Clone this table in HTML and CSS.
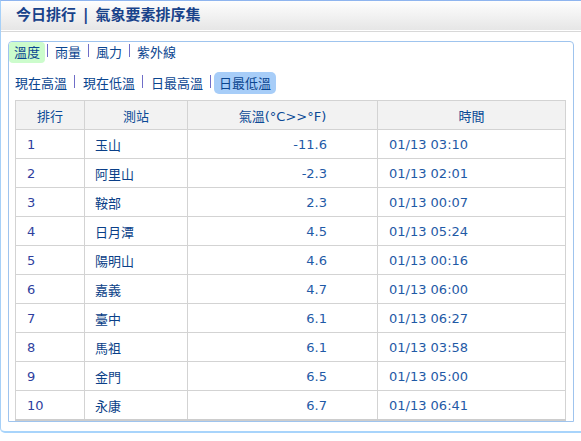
FILE: index.html
```html
<!DOCTYPE html>
<html lang="zh-Hant">
<head>
<meta charset="utf-8">
<title>今日排行</title>
<link rel="stylesheet" href="styles.css">
</head>
<body>
<div class="outer">
  <div class="header"><span>今日排行</span><span class="bar">|</span><span>氣象要素排序集</span></div>
  <div class="panel">
    <div class="tabs tabs-1">
      <span class="tab tab-green">溫度</span><span class="sep"></span><span class="tab">雨量</span><span class="sep"></span><span class="tab">風力</span><span class="sep"></span><span class="tab">紫外線</span>
    </div>
    <div class="tabs tabs-2">
      <span class="tab">現在高溫</span><span class="sep"></span><span class="tab">現在低溫</span><span class="sep"></span><span class="tab">日最高溫</span><span class="sep"></span><span class="tab tab-blue">日最低溫</span>
    </div>
    <table class="rank">
      <thead>
        <tr><th class="c-rank">排行</th><th class="c-st">測站</th><th class="c-temp">氣溫(°C&gt;&gt;°F)</th><th class="c-time">時間</th></tr>
      </thead>
      <tbody>
        <tr><td class="num">1</td><td class="name">玉山</td><td class="temp">-11.6</td><td class="time">01/13 03:10</td></tr>
        <tr><td class="num">2</td><td class="name">阿里山</td><td class="temp">-2.3</td><td class="time">01/13 02:01</td></tr>
        <tr><td class="num">3</td><td class="name">鞍部</td><td class="temp">2.3</td><td class="time">01/13 00:07</td></tr>
        <tr><td class="num">4</td><td class="name">日月潭</td><td class="temp">4.5</td><td class="time">01/13 05:24</td></tr>
        <tr><td class="num">5</td><td class="name">陽明山</td><td class="temp">4.6</td><td class="time">01/13 00:16</td></tr>
        <tr><td class="num">6</td><td class="name">嘉義</td><td class="temp">4.7</td><td class="time">01/13 06:00</td></tr>
        <tr><td class="num">7</td><td class="name">臺中</td><td class="temp">6.1</td><td class="time">01/13 06:27</td></tr>
        <tr><td class="num">8</td><td class="name">馬祖</td><td class="temp">6.1</td><td class="time">01/13 03:58</td></tr>
        <tr><td class="num">9</td><td class="name">金門</td><td class="temp">6.5</td><td class="time">01/13 05:00</td></tr>
        <tr><td class="num">10</td><td class="name">永康</td><td class="temp">6.7</td><td class="time">01/13 06:41</td></tr>
      </tbody>
    </table>
  </div>
</div>
</body>
</html>
```
FILE: styles.css
```css
html, body {
  margin: 0;
  padding: 0;
  background: #fff;
  overflow: hidden;
}
body {
  font-family: "DejaVu Sans", "Noto Sans CJK TC", sans-serif;
  font-size: 13px;
  color: #0a4590;
}
.outer {
  width: 582px;
  box-sizing: border-box;
  border-left: 1px solid #a6d0f8;
  border-bottom: 2px solid #a8d4fb;
  border-top: 1px solid #8fb5ef;
  border-bottom-left-radius: 5px;
  padding-bottom: 9px;
}
.header {
  height: 29px;
  line-height: 29px;
  padding-left: 15px;
  font-size: 15px;
  font-weight: bold;
  color: #18428a;
  background: linear-gradient(to bottom, #fefefe 0%, #f4f4f4 40%, #e6e6e6 100%);
  border-bottom: 1px solid #fff;
  box-shadow: 0 1px 0 #d8d8d8;
  font-family: "DejaVu Sans", "Noto Sans CJK TC", sans-serif;
}
.header .bar {
  margin: 0 7px;
}
.panel {
  margin: 10px 8px 0 7px;
  border: 1px solid #9fc4ee;
  border-radius: 4px 4px 0 0;
  padding: 0 5px 0 0;
}
.tabs {
  display: flex;
  align-items: center;
  line-height: 21px;
}
.tabs-1 {
  padding-left: 0;
  height: 21px;
}
.tabs-2 {
  margin-top: 9px;
  padding-left: 1px;
  height: 22px;
}
.tab {
  padding: 0 5px;
  color: #0a4590;
  border-radius: 4px;
  height: 100%;
  display: flex;
  align-items: center;
}
.tab-green {
  background: #ccfccc;
}
.tab-blue {
  background: #a7cdf8;
  border-radius: 5px;
}
.sep {
  width: 1px;
  height: 13px;
  margin: 0 2px 4px 2px;
  background: #6f6ec8;
}
.tabs-2 .sep {
  margin: 0 3px 4px 2px;
}
.rank {
  margin: 6px 0 0 6px;
  width: 551px;
  border-collapse: collapse;
  border-bottom: 2px solid #cdcdcd;
}
.rank th, .rank td {
  border: 1px solid #d3d3d3;
  height: 28px;
  padding: 0;
  font-weight: normal;
}
.rank th {
  background: #f2f2f2;
  color: #0b4a96;
  text-align: center;
}
.c-rank { width: 68px; }
.c-st { width: 102px; }
.c-temp { width: 189px; }
.rank td.num {
  padding-left: 11px;
  color: #2f3f9e;
}
.rank td.name {
  padding-left: 10px;
  color: #0a3f88;
}
.rank td.temp {
  text-align: right;
  padding-right: 50px;
  color: #1f5aa6;
}
.rank td.time {
  padding-left: 11px;
  color: #1f5aa6;
}
```
